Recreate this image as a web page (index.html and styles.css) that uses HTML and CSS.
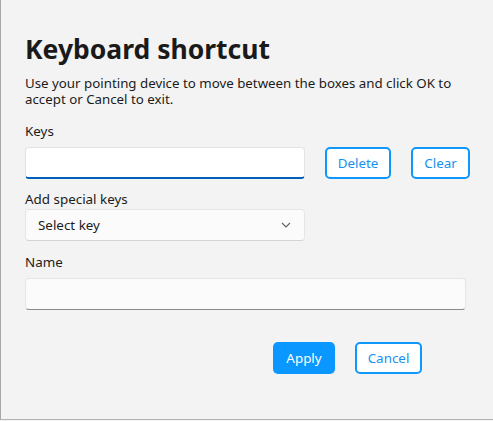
FILE: index.html
```html
<!DOCTYPE html>
<html>
<head>
<meta charset="utf-8">
<link rel="stylesheet" href="styles.css">
</head>
<body>
<div class="dialog">
  <h1 class="title">Keyboard shortcut</h1>
  <p class="desc">Use your pointing device to move between the boxes and click OK to accept or Cancel to exit.</p>
  <div class="label keys-label">Keys</div>
  <div class="keys-row">
    <div class="input keys-input"></div>
    <button class="btn outline btn-delete">Delete</button>
    <button class="btn outline btn-clear">Clear</button>
  </div>
  <div class="label special-label">Add special keys</div>
  <div class="select">
    <span>Select key</span>
    <svg class="chev" width="10" height="6" viewBox="0 0 10 6"><path d="M1 1 L5 5 L9 1" fill="none" stroke="#5f5f5f" stroke-width="1.1"/></svg>
  </div>
  <div class="label name-label">Name</div>
  <div class="input name-input"></div>
  <div class="actions">
    <button class="btn primary">Apply</button>
    <button class="btn outline btn-cancel">Cancel</button>
  </div>
</div>
</body>
</html>
```
FILE: styles.css
```css
html, body {
  margin: 0;
  padding: 0;
  background: #f3f3f3;
}
body {
  font-family: "Noto Sans", "Open Sans", sans-serif;
  color: #1b1b1b;
}
.dialog {
  box-sizing: border-box;
  width: 493px;
  height: 420px;
  border-left: 1px solid #a7a7a7;
  border-bottom: 1px solid #b4b4b4;
  padding: 30px 0 0 24px;
}
.title {
  margin: 0;
  font-size: 26.5px;
  font-weight: 700;
  line-height: 38px;
  color: #1a1a1a;
}
.desc {
  margin: 7px 0 0;
  font-size: 13.3px;
  line-height: 16px;
  width: 450px;
}
.label {
  font-size: 13.4px;
  line-height: 18px;
}
.keys-label { margin-top: 15px; }
.keys-row {
  display: flex;
  align-items: center;
  margin-top: 7px;
}
.input {
  box-sizing: border-box;
  height: 32px;
  border-radius: 4px;
}
.keys-input {
  width: 280px;
  background: #ffffff;
  border: 1px solid #e3e3e3;
  border-bottom: 2px solid #005fb8;
}
.btn {
  box-sizing: border-box;
  font-family: inherit;
  font-size: 13.4px;
  height: 32px;
  border-radius: 5px;
  padding: 0;
  cursor: pointer;
}
.outline {
  background: #ffffff;
  border: 2px solid #0f97fb;
  color: #1790f0;
}
.btn-delete { width: 66px; margin-left: 20px; }
.btn-clear { width: 59px; margin-left: 20px; }
.special-label { margin-top: 11px; }
.select {
  box-sizing: border-box;
  width: 280px;
  height: 32px;
  margin-top: 1px;
  background: #fbfbfb;
  border: 1px solid #e5e5e5;
  border-bottom-color: #d3d3d3;
  border-radius: 4px;
  display: flex;
  align-items: center;
  justify-content: space-between;
  padding: 0 13px 0 12px;
  font-size: 13.4px;
}
.name-label { margin-top: 12px; }
.name-input {
  margin-top: 7px;
  width: 441px;
  background: #fbfbfb;
  border: 1px solid #e5e5e5;
  border-bottom: 1px solid #8a8a8a;
}
.actions {
  display: flex;
  margin-top: 32px;
  margin-left: 248px;
  gap: 20px;
}
.primary {
  width: 62px;
  background: #0a97ff;
  border: none;
  color: #ffffff;
}
.btn-cancel { width: 67px; }
```
